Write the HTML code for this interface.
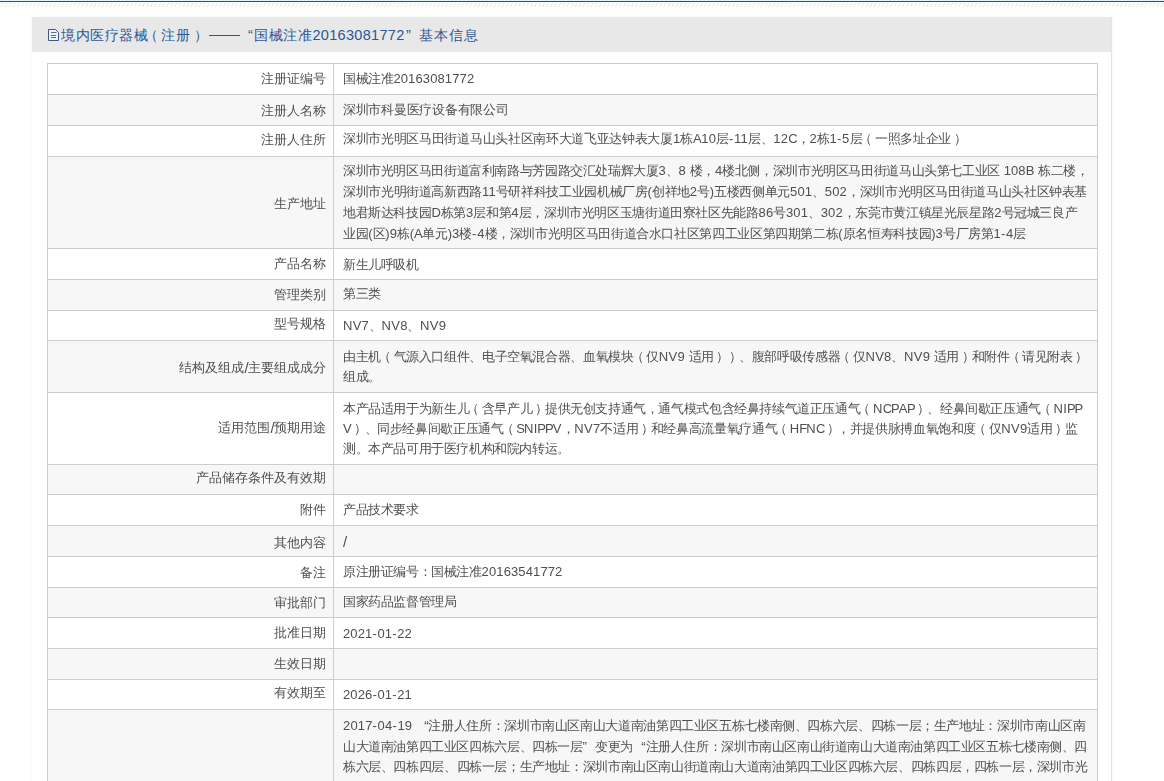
<!DOCTYPE html>
<html><head><meta charset="utf-8"><style>
html,body{--x:0px;margin:0;padding:0;background:#fff;width:1164px;height:781px;overflow:hidden;font-family:"Liberation Sans",sans-serif;text-spacing-trim:space-all;}
.topline{position:absolute;left:0;top:0;width:1164px;height:1px;background:#dff2f8;border-bottom:1px solid #2d4f80;}
.hatch{position:absolute;left:0;top:3px;width:1164px;height:4px;background:repeating-linear-gradient(-60deg,#fff 0 2px,#f2ede8 2px 3.5px);}
.panel{position:absolute;left:32px;top:17px;width:1079px;height:800px;background:#fff;border-right:1px solid #e4e4e4;box-shadow:0 0 5px rgba(0,0,0,0.04);}
.head{position:absolute;left:0;top:0;width:1079px;height:35px;background:#e8e8e8;}
.icon{position:absolute;left:47px;top:28px;width:14px;height:15px;}
.title{position:absolute;left:0;top:25px;width:600px;height:20px;color:#2b5797;white-space:nowrap;}
.title span{position:absolute;top:0;line-height:20px;}
.tc{font-size:14px;letter-spacing:0.55px;}
.td{font-size:14.5px;letter-spacing:0.31px;}
.tq{font-size:14.5px;}
.dash{position:absolute;left:209px;top:10px;width:31px;height:1px;background:#2b5797;}
.tbl{position:absolute;left:0;top:0;width:1164px;height:781px;filter:grayscale(1);}
.row{position:absolute;left:47px;width:1051px;border-top:1px solid #cdcdcd;border-left:1px solid #cdcdcd;border-right:1px solid #cdcdcd;box-sizing:border-box;background:#fff;}
.row.g{background:#f7f7f7;}
.vline{position:absolute;left:333px;top:63px;width:1px;height:800px;background:#cdcdcd;}
.lab{position:absolute;right:838px;font-size:13px;line-height:20px;color:#4f4f4f;white-space:nowrap;}
.val{position:absolute;left:343px;font-size:13px;line-height:20px;color:#4f4f4f;white-space:nowrap;}
.c{letter-spacing:calc(-0.4px + var(--x,0px));}
.ql{display:inline-block;width:12.6px;text-align:right;}
.qr{display:inline-block;width:12.6px;text-align:left;}
.a{letter-spacing:0;}

.lp{letter-spacing:calc(-0.4px + var(--x,0px));position:relative;left:-3px;}
.rp{letter-spacing:calc(-0.4px + var(--x,0px));position:relative;left:2.5px;}
.lab .c{letter-spacing:0px;}
.tc4{font-size:14px;letter-spacing:1.2px;}
.sl{font-size:15px;letter-spacing:-0.6px;position:relative;top:1px;}

</style></head><body>
<div class="topline"></div><div class="hatch"></div>
<div class="panel"><div class="head"></div></div>
<div class="icon"><svg width="14" height="15" viewBox="0 0 14 15"><path d="M1.5 1.5 H8.5 L11.5 4.5 V12.5 H1.5 Z" fill="#eef3fa" stroke="#44578a" stroke-width="1"/><path d="M4 4.5 H9.5 M4 7.5 H9 M4 9.5 H9" stroke="#4a5d95" stroke-width="0.9"/></svg></div>
<div class="title"><span class="tc" style="left:61px">境内医疗器械</span><span class="tc" style="left:144px">（</span><span class="tc" style="left:161px">注册</span><span class="tc" style="left:193.5px">）</span><span class="tq" style="left:248px">“</span><span class="tc" style="left:254.3px">国械注准</span><span class="td" style="left:312.5px">20163081772</span><span class="tq" style="left:406px">”</span><span class="tc4" style="left:418.5px">基本信息</span><div class="dash"></div></div>
<div class="tbl"><div class="row" style="top:63px;height:31px"></div><div class="lab" style="top:69.4px"><span class="c">注册证编号</span></div><div class="val" style="top:68.7px;--x:0.000px"><span class="c">国械注准</span><span class="a" style="letter-spacing:calc(0.12px + var(--x))">20163081772</span></div><div class="row g" style="top:94px;height:31px"></div><div class="lab" style="top:100.6px"><span class="c">注册人名称</span></div><div class="val" style="top:99.7px;--x:0.125px"><span class="c">深圳市科曼医疗设备有限公司</span></div><div class="row" style="top:125px;height:31px"></div><div class="lab" style="top:130.1px"><span class="c">注册人住所</span></div><div class="val" style="top:129.2px;--x:0.087px"><span class="c">深圳市光明区马田街道马山头社区南环大道飞亚达钟表大厦</span><span class="a" style="letter-spacing:calc(0.12px + var(--x))">1</span><span class="c">栋</span><span class="a" style="letter-spacing:calc(-0.4px + var(--x))">A</span><span class="a" style="letter-spacing:calc(0.12px + var(--x))">10</span><span class="c">层</span><span class="a" style="letter-spacing:calc(0.7px + var(--x))">-</span><span class="a" style="letter-spacing:calc(0.12px + var(--x))">11</span><span class="c">层、</span><span class="a" style="letter-spacing:calc(0.12px + var(--x))">12</span><span class="a" style="letter-spacing:calc(-1.0px + var(--x))">C</span><span class="c">，</span><span class="a" style="letter-spacing:calc(0.12px + var(--x))">2</span><span class="c">栋</span><span class="a" style="letter-spacing:calc(0.12px + var(--x))">1</span><span class="a" style="letter-spacing:calc(0.7px + var(--x))">-</span><span class="a" style="letter-spacing:calc(0.12px + var(--x))">5</span><span class="c">层</span><span class="lp">（</span><span class="c">一照多址企业</span><span class="rp">）</span></div><div class="row g" style="top:156px;height:92px"></div><div class="lab" style="top:193.5px"><span class="c">生产地址</span></div><div class="val" style="top:160.7px;--x:0.024px"><span class="c">深圳市光明区马田街道富利南路与芳园路交汇处瑞辉大厦</span><span class="a" style="letter-spacing:calc(0.12px + var(--x))">3</span><span class="c">、</span><span class="a" style="letter-spacing:calc(0.12px + var(--x))">8</span><span class="a" style="letter-spacing:calc(0.0px + var(--x))"> </span><span class="c">楼，</span><span class="a" style="letter-spacing:calc(0.12px + var(--x))">4</span><span class="c">楼北侧，深圳市光明区马田街道马山头第七工业区</span><span class="a" style="letter-spacing:calc(0.0px + var(--x))"> </span><span class="a" style="letter-spacing:calc(0.12px + var(--x))">108</span><span class="a" style="letter-spacing:calc(0.0px + var(--x))">B </span><span class="c">栋二楼，</span></div><div class="val" style="top:181.7px;--x:0.038px"><span class="c">深圳市光明街道高新西路</span><span class="a" style="letter-spacing:calc(0.12px + var(--x))">11</span><span class="c">号研祥科技工业园机械厂房</span><span class="a" style="letter-spacing:calc(0.0px + var(--x))">(</span><span class="c">创祥地</span><span class="a" style="letter-spacing:calc(0.12px + var(--x))">2</span><span class="c">号</span><span class="a" style="letter-spacing:calc(0.0px + var(--x))">)</span><span class="c">五楼西侧单元</span><span class="a" style="letter-spacing:calc(0.12px + var(--x))">501</span><span class="c">、</span><span class="a" style="letter-spacing:calc(0.12px + var(--x))">502</span><span class="c">，深圳市光明区马田街道马山头社区钟表基</span></div><div class="val" style="top:202.7px;--x:0.023px"><span class="c">地君斯达科技园</span><span class="a" style="letter-spacing:calc(0.0px + var(--x))">D</span><span class="c">栋第</span><span class="a" style="letter-spacing:calc(0.12px + var(--x))">3</span><span class="c">层和第</span><span class="a" style="letter-spacing:calc(0.12px + var(--x))">4</span><span class="c">层，深圳市光明区玉塘街道田寮社区先能路</span><span class="a" style="letter-spacing:calc(0.12px + var(--x))">86</span><span class="c">号</span><span class="a" style="letter-spacing:calc(0.12px + var(--x))">301</span><span class="c">、</span><span class="a" style="letter-spacing:calc(0.12px + var(--x))">302</span><span class="c">，东莞市黄江镇星光辰星路</span><span class="a" style="letter-spacing:calc(0.12px + var(--x))">2</span><span class="c">号冠城三良产</span></div><div class="val" style="top:223.7px;--x:0.036px"><span class="c">业园</span><span class="a" style="letter-spacing:calc(0.0px + var(--x))">(</span><span class="c">区</span><span class="a" style="letter-spacing:calc(0.0px + var(--x))">)</span><span class="a" style="letter-spacing:calc(0.12px + var(--x))">9</span><span class="c">栋</span><span class="a" style="letter-spacing:calc(0.0px + var(--x))">(</span><span class="a" style="letter-spacing:calc(-0.4px + var(--x))">A</span><span class="c">单元</span><span class="a" style="letter-spacing:calc(0.0px + var(--x))">)</span><span class="a" style="letter-spacing:calc(0.12px + var(--x))">3</span><span class="c">楼</span><span class="a" style="letter-spacing:calc(0.7px + var(--x))">-</span><span class="a" style="letter-spacing:calc(0.12px + var(--x))">4</span><span class="c">楼，深圳市光明区马田街道合水口社区第四工业区第四期第二栋</span><span class="a" style="letter-spacing:calc(0.0px + var(--x))">(</span><span class="c">原名恒寿科技园</span><span class="a" style="letter-spacing:calc(0.0px + var(--x))">)</span><span class="a" style="letter-spacing:calc(0.12px + var(--x))">3</span><span class="c">号厂房第</span><span class="a" style="letter-spacing:calc(0.12px + var(--x))">1</span><span class="a" style="letter-spacing:calc(0.7px + var(--x))">-</span><span class="a" style="letter-spacing:calc(0.12px + var(--x))">4</span><span class="c">层</span></div><div class="row" style="top:248px;height:31px"></div><div class="lab" style="top:254.0px"><span class="c">产品名称</span></div><div class="val" style="top:254.7px;--x:0.000px"><span class="c">新生儿呼吸机</span></div><div class="row g" style="top:279px;height:31px"></div><div class="lab" style="top:285.0px"><span class="c">管理类别</span></div><div class="val" style="top:283.7px;--x:0.000px"><span class="c">第三类</span></div><div class="row" style="top:310px;height:30px"></div><div class="lab" style="top:314.2px"><span class="c">型号规格</span></div><div class="val" style="top:315.9px;--x:0.000px"><span class="a" style="letter-spacing:calc(0.3px + var(--x))">N</span><span class="a" style="letter-spacing:calc(0.2px + var(--x))">V</span><span class="a" style="letter-spacing:calc(0.12px + var(--x))">7</span><span class="c">、</span><span class="a" style="letter-spacing:calc(0.3px + var(--x))">N</span><span class="a" style="letter-spacing:calc(0.2px + var(--x))">V</span><span class="a" style="letter-spacing:calc(0.12px + var(--x))">8</span><span class="c">、</span><span class="a" style="letter-spacing:calc(0.3px + var(--x))">N</span><span class="a" style="letter-spacing:calc(0.2px + var(--x))">V</span><span class="a" style="letter-spacing:calc(0.12px + var(--x))">9</span></div><div class="row g" style="top:340px;height:52px"></div><div class="lab" style="top:356.5px"><span class="c">结构及组成</span><span class="sl">/</span><span class="c">主要组成成分</span></div><div class="val" style="top:346.7px;--x:0.032px"><span class="c">由主机</span><span class="lp">（</span><span class="c">气源入口组件、电子空氧混合器、血氧模块</span><span class="lp">（</span><span class="c">仅</span><span class="a" style="letter-spacing:calc(0.3px + var(--x))">N</span><span class="a" style="letter-spacing:calc(0.2px + var(--x))">V</span><span class="a" style="letter-spacing:calc(0.12px + var(--x))">9</span><span class="a" style="letter-spacing:calc(0.0px + var(--x))"> </span><span class="c">适用</span><span class="rp">）</span><span class="rp">）</span><span class="c">、腹部呼吸传感器</span><span class="lp">（</span><span class="c">仅</span><span class="a" style="letter-spacing:calc(0.3px + var(--x))">N</span><span class="a" style="letter-spacing:calc(0.2px + var(--x))">V</span><span class="a" style="letter-spacing:calc(0.12px + var(--x))">8</span><span class="c">、</span><span class="a" style="letter-spacing:calc(0.3px + var(--x))">N</span><span class="a" style="letter-spacing:calc(0.2px + var(--x))">V</span><span class="a" style="letter-spacing:calc(0.12px + var(--x))">9</span><span class="a" style="letter-spacing:calc(0.0px + var(--x))"> </span><span class="c">适用</span><span class="rp">）</span><span class="c">和附件</span><span class="lp">（</span><span class="c">请见附表</span><span class="rp">）</span></div><div class="val" style="top:367.2px;--x:0.000px"><span class="c">组成。</span></div><div class="row" style="top:392px;height:72px"></div><div class="lab" style="top:417.2px"><span class="c">适用范围</span><span class="sl">/</span><span class="c">预期用途</span></div><div class="val" style="top:398.7px;--x:0.016px"><span class="c">本产品适用于为新生儿</span><span class="lp">（</span><span class="c">含早产儿</span><span class="rp">）</span><span class="c">提供无创支持通气，通气模式包含经鼻持续气道正压通气</span><span class="lp">（</span><span class="a" style="letter-spacing:calc(0.3px + var(--x))">N</span><span class="a" style="letter-spacing:calc(-1.0px + var(--x))">CP</span><span class="a" style="letter-spacing:calc(-0.4px + var(--x))">A</span><span class="a" style="letter-spacing:calc(-1.0px + var(--x))">P</span><span class="rp">）</span><span class="c">、经鼻间歇正压通气</span><span class="lp">（</span><span class="a" style="letter-spacing:calc(0.3px + var(--x))">N</span><span class="a" style="letter-spacing:calc(0.0px + var(--x))">I</span><span class="a" style="letter-spacing:calc(-1.0px + var(--x))">PP</span></div><div class="val" style="top:419.2px;--x:0.035px"><span class="a" style="letter-spacing:calc(0.2px + var(--x))">V</span><span class="rp">）</span><span class="c">、同步经鼻间歇正压通气</span><span class="lp">（</span><span class="a" style="letter-spacing:calc(-1.0px + var(--x))">S</span><span class="a" style="letter-spacing:calc(0.3px + var(--x))">N</span><span class="a" style="letter-spacing:calc(0.0px + var(--x))">I</span><span class="a" style="letter-spacing:calc(-1.0px + var(--x))">PP</span><span class="a" style="letter-spacing:calc(0.2px + var(--x))">V</span><span class="c">，</span><span class="a" style="letter-spacing:calc(0.3px + var(--x))">N</span><span class="a" style="letter-spacing:calc(0.2px + var(--x))">V</span><span class="a" style="letter-spacing:calc(0.12px + var(--x))">7</span><span class="c">不适用</span><span class="rp">）</span><span class="c">和经鼻高流量氧疗通气</span><span class="lp">（</span><span class="a" style="letter-spacing:calc(0.0px + var(--x))">H</span><span class="a" style="letter-spacing:calc(-1.0px + var(--x))">F</span><span class="a" style="letter-spacing:calc(0.3px + var(--x))">N</span><span class="a" style="letter-spacing:calc(-1.0px + var(--x))">C</span><span class="rp">）</span><span class="c">，并提供脉搏血氧饱和度</span><span class="lp">（</span><span class="c">仅</span><span class="a" style="letter-spacing:calc(0.3px + var(--x))">N</span><span class="a" style="letter-spacing:calc(0.2px + var(--x))">V</span><span class="a" style="letter-spacing:calc(0.12px + var(--x))">9</span><span class="c">适用</span><span class="rp">）</span><span class="c">监</span></div><div class="val" style="top:438.7px;--x:0.000px"><span class="c">测。本产品可用于医疗机构和院内转运。</span></div><div class="row g" style="top:464px;height:30px"></div><div class="lab" style="top:468.3px"><span class="c">产品储存条件及有效期</span></div><div class="row" style="top:494px;height:31px"></div><div class="lab" style="top:500.2px"><span class="c">附件</span></div><div class="val" style="top:499.7px;--x:0.000px"><span class="c">产品技术要求</span></div><div class="row g" style="top:525px;height:31px"></div><div class="lab" style="top:532.7px"><span class="c">其他内容</span></div><div class="val" style="top:531.2px;--x:0.000px"><span class="sl">/</span></div><div class="row" style="top:556px;height:31px"></div><div class="lab" style="top:562.7px"><span class="c">备注</span></div><div class="val" style="top:561.7px;--x:0.000px"><span class="c">原注册证编号：国械注准</span><span class="a" style="letter-spacing:calc(0.12px + var(--x))">20163541772</span></div><div class="row g" style="top:587px;height:30px"></div><div class="lab" style="top:592.9px"><span class="c">审批部门</span></div><div class="val" style="top:592.2px;--x:0.000px"><span class="c">国家药品监督管理局</span></div><div class="row" style="top:617px;height:31px"></div><div class="lab" style="top:623.0px"><span class="c">批准日期</span></div><div class="val" style="top:624.1px;--x:0.000px"><span class="a" style="letter-spacing:calc(0.12px + var(--x))">2021</span><span class="a" style="letter-spacing:calc(0.7px + var(--x))">-</span><span class="a" style="letter-spacing:calc(0.12px + var(--x))">01</span><span class="a" style="letter-spacing:calc(0.7px + var(--x))">-</span><span class="a" style="letter-spacing:calc(0.12px + var(--x))">22</span></div><div class="row g" style="top:648px;height:31px"></div><div class="lab" style="top:654.0px"><span class="c">生效日期</span></div><div class="row" style="top:679px;height:30px"></div><div class="lab" style="top:683.2px"><span class="c">有效期至</span></div><div class="val" style="top:685.0px;--x:0.000px"><span class="a" style="letter-spacing:calc(0.12px + var(--x))">2026</span><span class="a" style="letter-spacing:calc(0.7px + var(--x))">-</span><span class="a" style="letter-spacing:calc(0.12px + var(--x))">01</span><span class="a" style="letter-spacing:calc(0.7px + var(--x))">-</span><span class="a" style="letter-spacing:calc(0.12px + var(--x))">21</span></div><div class="row g" style="top:709px;height:191px"></div><div class="val" style="top:715.7px;--x:0.033px"><span class="a" style="letter-spacing:calc(0.12px + var(--x))">2017</span><span class="a" style="letter-spacing:calc(0.7px + var(--x))">-</span><span class="a" style="letter-spacing:calc(0.12px + var(--x))">04</span><span class="a" style="letter-spacing:calc(0.7px + var(--x))">-</span><span class="a" style="letter-spacing:calc(0.12px + var(--x))">19</span><span class="a" style="letter-spacing:calc(0.0px + var(--x))"> </span><span class="ql">“</span><span class="c">注册人住所：深圳市南山区南山大道南油第四工业区五栋七楼南侧、四栋六层、四栋一层；生产地址：深圳市南山区南</span></div><div class="val" style="top:736.7px;--x:0.010px"><span class="c">山大道南油第四工业区四栋六层、四栋一层</span><span class="qr">”</span><span class="c">变更为</span><span class="ql">“</span><span class="c">注册人住所：深圳市南山区南山街道南山大道南油第四工业区五栋七楼南侧、四</span></div><div class="val" style="top:757.2px;--x:0.016px"><span class="c">栋六层、四栋四层、四栋一层；生产地址：深圳市南山区南山街道南山大道南油第四工业区四栋六层、四栋四层，四栋一层，深圳市光</span></div><div class="vline"></div></div>
</body></html>
